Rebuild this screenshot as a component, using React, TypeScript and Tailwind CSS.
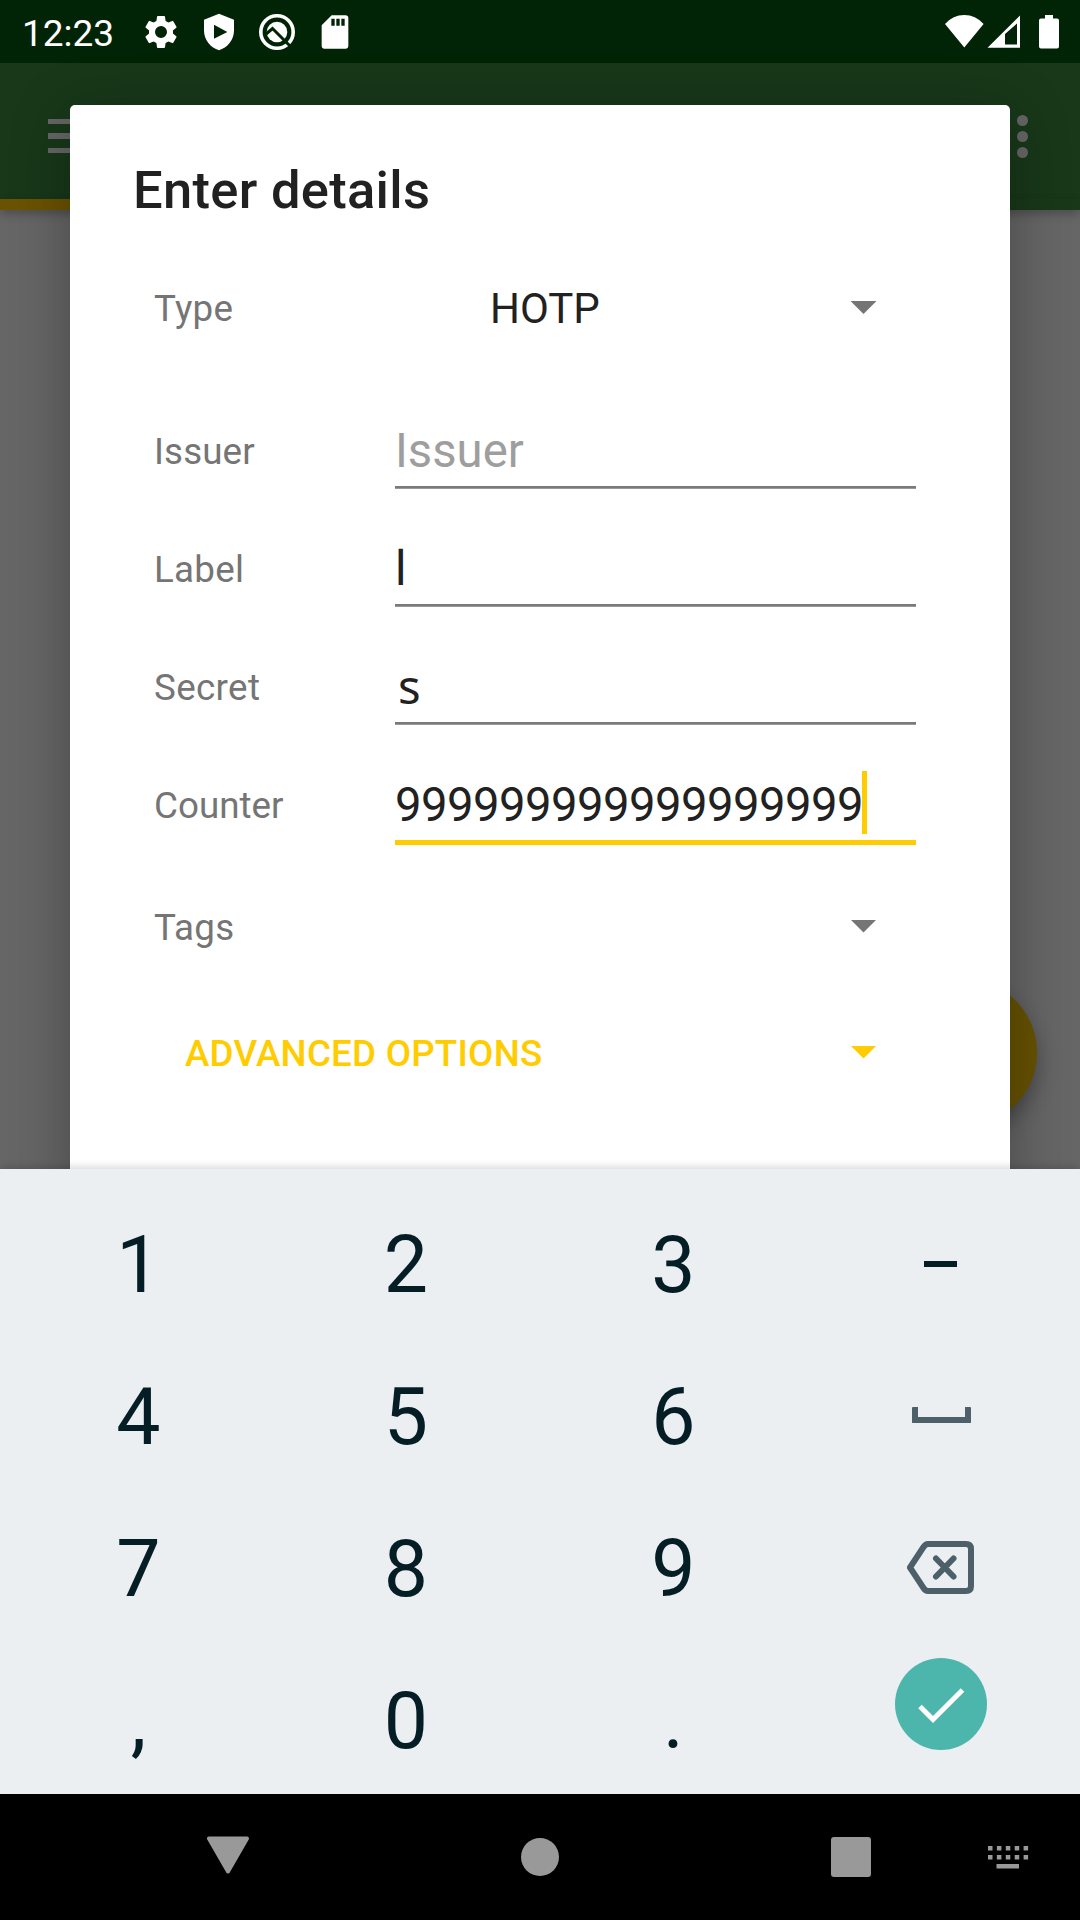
import React from "react";

const arrow = "h-[13px] w-[26px] [clip-path:polygon(0_0,100%_0,50%_100%)]";

function Field({ label, value, labelClass = "", valueClass = "text-[#212121]", focused = false }: { label: string; value: string; labelClass?: string; valueClass?: string; focused?: boolean }) {
  return (
    <div className="flex h-[118px]">
      <div className={"w-[241px] pt-[42px] text-[36.75px] leading-[44px] text-[#757575] " + labelClass}>{label}</div>
      <div className="w-[521px]">
        <div className={"flex h-[98px] items-center pt-[28px] text-[47.25px] leading-[60px] " + valueClass}>
          {value}
          {focused && <span className="-ml-[1px] -mt-[5px] h-[63px] w-[5px] shrink-0 bg-[#ffcc00]" />}
        </div>
        <div className={focused ? "h-[5px] bg-[#ffcc00]" : "h-[3px] border-b border-[#999] bg-[#7a7a7a]"} />
      </div>
    </div>
  );
}

function Key({ children }: { children: string }) {
  return <div className="flex items-center justify-center pr-[0.5px] pt-[6px] text-[78.75px] leading-[80px]">{children}</div>;
}

export default function App() {
  return (
    <div className="relative flex h-[1920px] w-[1080px] flex-col overflow-hidden bg-[#666] font-['Roboto',sans-serif]">
      <header className="flex h-[63px] shrink-0 items-center bg-[#002405] text-white">
        <div className="w-[118px] pl-[22px] pt-[4px] text-[37px] leading-[44px]">12:23</div>
        <div className="flex items-center gap-[18px] pl-[23px]">
          <svg className="size-[40px]" viewBox="0 0 24 24" fill="currentColor"><path d="M19.14 12.94c.04-.3.06-.61.06-.94s-.02-.64-.07-.94l2.03-1.58a.49.49 0 0 0 .12-.61l-1.92-3.32a.49.49 0 0 0-.59-.22l-2.39.96a7 7 0 0 0-1.62-.94l-.36-2.54a.48.48 0 0 0-.48-.41h-3.84a.47.47 0 0 0-.47.41l-.36 2.54c-.59.24-1.13.57-1.62.94l-2.39-.96a.48.48 0 0 0-.59.22L2.74 8.87a.47.47 0 0 0 .12.61l2.03 1.58c-.05.3-.09.63-.09.94s.02.64.07.94l-2.03 1.58a.49.49 0 0 0-.12.61l1.92 3.32c.12.22.37.29.59.22l2.39-.96c.5.38 1.03.7 1.62.94l.36 2.54c.05.24.24.41.48.41h3.84c.24 0 .44-.17.47-.41l.36-2.54a7 7 0 0 0 1.62-.94l2.39.96c.22.08.47 0 .59-.22l1.92-3.32a.47.47 0 0 0-.12-.61zM12 15.6a3.6 3.6 0 1 1 0-7.2 3.6 3.6 0 0 1 0 7.2" /></svg>
          <svg className="size-[40px]" viewBox="0 0 24 24" fill="currentColor" fillRule="evenodd"><path d="M12 1 3 4.6V11c0 6 4 10.5 9 12 5-1.5 9-6 9-12V4.6zM9 7.7l8 4.3-8 4z" /></svg>
          <svg className="size-[40px]" viewBox="0 0 40 40" fill="none">
            <circle cx="20" cy="20" r="16.2" stroke="currentColor" strokeWidth="3.6" />
            <circle cx="20" cy="20" r="10.3" fill="currentColor" />
            <path d="M8.500 22.500 15.500 16.500 33.500 34.500" stroke="#002405" strokeWidth="3" />
          </svg>
          <svg className="size-[40px]" viewBox="0 0 24 24" fill="currentColor" fillRule="evenodd"><path d="M18.400 2H10L4 8v12.400c0 .9.700 1.600 1.600 1.600h12.800c.9 0 1.600-.7 1.600-1.600V3.600c0-.9-.7-1.600-1.600-1.600zM9.800 4h2v4.300h-2zm3 0h2v4.300h-2zm3 0h2v4.300h-2z" /></svg>
        </div>
        <svg className="ml-auto mr-[21px] h-[34px] w-[114px]" viewBox="0 0 114 34" fill="currentColor" fillRule="evenodd"><path d="M0 9Q8 0 19.300 0T38.600 9L19.300 32.500zM42.500 32.800 75 .5v32.300zM60 29.600h12V8.500L60 19z" /><path d="M100 0h8v3.500h4q2 0 2 2v26q0 2-2 2H96q-2 0-2-2v-26q0-2 2-2h4z" /></svg>
      </header>

      <div className="flex h-[136px] shrink-0 items-center justify-between bg-[#183819] pl-[48px] pr-[52px]">
        <div className="flex flex-col gap-[9px] pt-[10px]">
          <div className="h-[5.3px] w-[47px] bg-[#666]" />
          <div className="h-[5.3px] w-[47px] bg-[#666]" />
          <div className="h-[5.3px] w-[47px] bg-[#666]" />
        </div>
        <div className="flex flex-col gap-[5px] pt-[11px]">
          <div className="size-[11px] rounded-full bg-[#666]" />
          <div className="size-[11px] rounded-full bg-[#666]" />
          <div className="size-[11px] rounded-full bg-[#666]" />
        </div>
      </div>
      <div className="flex h-[11px] shrink-0 bg-[#183819] shadow-[0_4px_10px_rgba(0,0,0,0.25)]"><div className="w-[540px] bg-[#6a5300]" /></div>

      <div className="absolute left-[890px] top-[979px] size-[147px] rounded-full bg-[#665200] shadow-[0_10px_20px_rgba(0,0,0,0.3)]" />

      <section className="absolute left-[70px] top-[105px] h-[1100px] w-[940px] rounded-[5px] bg-white shadow-[0_12px_60px_rgba(0,0,0,0.3)]">
        <h1 className="h-[143px] pl-[63px] pt-[54.5px] text-[52.5px] font-medium leading-[60px] tracking-[0.3px] text-[#212121]">Enter details</h1>
        <div className="flex h-[121px] items-start pl-[84px]">
          <div className="w-[336px] pt-[39px] text-[36.75px] leading-[44px] tracking-[0.3px] text-[#757575]">Type</div>
          <div className="w-[360.5px] pt-[37px] text-[42px] leading-[48px] text-[#212121]">HOTP</div>
          <div className={"mt-[53px] bg-[#757575] " + arrow} />
        </div>
        <div className="pl-[84px] pt-[19px]">
          <Field label="Issuer" value="Issuer" labelClass="tracking-[0.1px]" valueClass="text-[#9e9e9e]" />
          <Field label="Label" value="l" labelClass="tracking-[0.25px]" />
          <Field label="Secret" value="s" labelClass="tracking-[0.35px]" valueClass="-mt-[1px] mb-[1px] pl-[3px] font-['Noto_Sans',sans-serif] text-[#212121]" />
          <Field label="Counter" value="999999999999999999" valueClass="tracking-[-0.55px] text-[#212121]" focused />
        </div>
        <div className="mt-[14px] flex h-[104px] items-center justify-between pl-[84px] pr-[133.5px]">
          <div className="pt-[4px] text-[36.75px] leading-[44px] tracking-[0.2px] text-[#757575]">Tags</div>
          <div className={"bg-[#757575] " + arrow} />
        </div>
        <div className="flex h-[148px] items-center justify-between pl-[115px] pr-[133.5px]">
          <div className="pt-[4px] text-[36.75px] font-medium leading-[44px] tracking-[0.22px] text-[#ffcc00]">ADVANCED OPTIONS</div>
          <div className={"bg-[#ffcc00] " + arrow} />
        </div>
      </section>

      <main className="relative mt-auto h-[625px] shrink-0 bg-[#ebeff2] px-[5px] pt-[17px] text-[#051e26] shadow-[0_-2px_8px_rgba(0,0,0,0.16)]">
        <div className="grid auto-rows-[152px] grid-cols-4">
          <Key>1</Key><Key>2</Key><Key>3</Key>
          <div className="flex items-center justify-center pr-[2px] pt-[3px]"><div className="h-[6px] w-[33px] bg-[#051e26]" /></div>
          <Key>4</Key><Key>5</Key><Key>6</Key>
          <div className="flex items-center justify-center pt-[2px]"><div className="h-[16px] w-[59px] rounded-[1px] border-x-[6px] border-b-[6px] border-[#4d5f68]" /></div>
          <Key>7</Key><Key>8</Key><Key>9</Key>
          <div className="flex items-center justify-center pr-[2px] pt-[3px]"><svg className="h-[53px] w-[67px]" viewBox="0 0 67 53" fill="none" stroke="#4d5f68" strokeWidth="6"><path d="M3 26.500 16.500 6Q18.500 3 21 3H59Q64 3 64 8V45Q64 50 59 50H21Q18.500 50 16.500 47z" /><path d="M29 17.500 46.500 35.500M46.500 17.500 29 35.500" strokeLinecap="round" /></svg></div>
          <Key>,</Key><Key>0</Key><Key>.</Key>
          <div className="flex items-start justify-center pt-[16px]"><div className="flex size-[92px] items-center justify-center rounded-full bg-[#4db6ac] pt-[1px]"><svg className="h-[36px] w-[48px]" viewBox="0 0 48 36" fill="none" stroke="white" strokeWidth="5"><path d="M3 19.500 16 32.500 45.500 3" /></svg></div></div>
        </div>
      </main>

      <nav className="flex h-[126px] shrink-0 items-center bg-black pl-[207px] pr-[51px] text-[#999]">
        <svg className="mb-[4px] h-[38px] w-[42px]" viewBox="0 0 42 38" fill="currentColor" stroke="currentColor" strokeWidth="4" strokeLinejoin="round"><path d="M2 2.500H40L21 35.500z" /></svg>
        <div className="ml-[271.5px] size-[38px] rounded-full bg-[#999]" />
        <div className="ml-[272px] size-[40px] rounded-[3px] bg-[#999]" />
        <svg className="ml-auto h-[24px] w-[42px]" viewBox="0 0 42 24" fill="currentColor">
          {[0, 1, 2, 3, 4].map((i) => <g key={i}><rect x={1 + i * 8.900} y="1" width="4.500" height="4.500" /><rect x={1 + i * 8.900} y="10" width="4.500" height="4.500" /></g>)}
          <rect x="9.500" y="19" width="22.500" height="4.500" />
        </svg>
      </nav>
    </div>
  );
}
